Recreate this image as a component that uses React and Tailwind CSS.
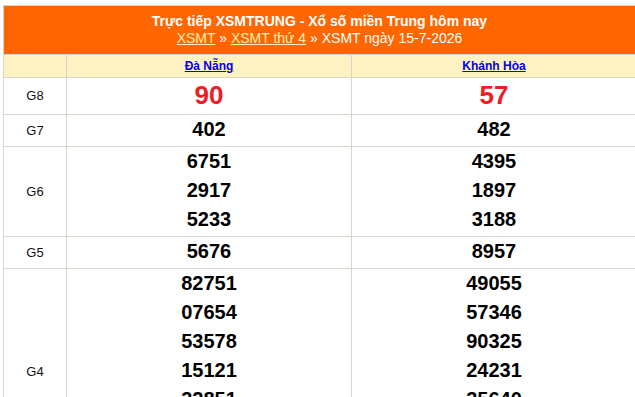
import React from "react";

const provinces = ["Đà Nẵng", "Khánh Hòa"];

const rows = [
  { label: "G8", values: [["90"], ["57"]], big: true },
  { label: "G7", values: [["402"], ["482"]] },
  { label: "G6", values: [["6751", "2917", "5233"], ["4395", "1897", "3188"]] },
  { label: "G5", values: [["5676"], ["8957"]] },
  {
    label: "G4",
    values: [
      ["82751", "07654", "53578", "15121", "32851", "61497", "70382"],
      ["49055", "57346", "90325", "24231", "35640", "18872", "06419"],
    ],
  },
];

export default function App() {
  return (
    <div className="w-full h-screen overflow-hidden bg-white font-['Liberation_Sans',Arial,sans-serif]">
      <div className="ml-[3px] mt-[5px] w-[633px] border-l border-t border-[#dcd4cb]">
        {/* TITLE */}
        <div className="bg-[#ff6600] border-r border-b border-[#dcd4cb] py-[7px] text-center text-white text-[14px] leading-[17px]">
          <div className="font-bold">Trực tiếp XSMTRUNG - Xổ số miền Trung hôm nay</div>
          <div>
            <a className="underline text-[#ffeeb3]">XSMT</a> »{" "}
            <a className="underline text-[#ffeeb3]">XSMT thứ 4</a> » XSMT ngày 15-7-2026
          </div>
        </div>

        {/* PROVINCES */}
        <div className="grid grid-cols-[63px_285px_285px] bg-[#fff2c2]">
          <div className="h-[23px] border-r border-b border-[#dcd4cb]" />
          {provinces.map((p) => (
            <div
              key={p}
              className="h-[23px] border-r border-b border-[#dcd4cb] flex items-center justify-center"
            >
              <a className="text-[12px] font-bold text-[#0000ee] underline">{p}</a>
            </div>
          ))}
        </div>

        {/* PRIZES */}
        {rows.map((r) => (
          <div key={r.label} className="grid grid-cols-[63px_285px_285px]">
            <div className="border-r border-b border-[#dcd4cb] flex items-center justify-center text-[13px] text-[#111]">
              {r.label}
            </div>
            {r.values.map((col, i) => (
              <div key={i} className="border-r border-b border-[#dcd4cb] pb-[2px] text-center">
                {col.map((n) =>
                  r.big ? (
                    <div key={n} className="text-[26px] leading-[34px] font-bold text-[#ee1c25]">
                      {n}
                    </div>
                  ) : (
                    <div key={n} className="text-[20px] leading-[29px] font-bold text-black">
                      {n}
                    </div>
                  )
                )}
              </div>
            ))}
          </div>
        ))}
      </div>
    </div>
  );
}
